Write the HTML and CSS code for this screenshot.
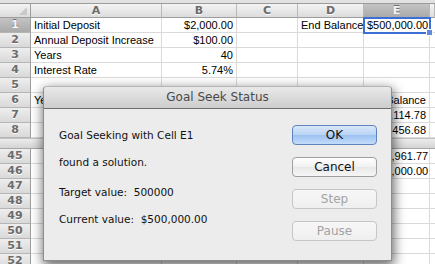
FILE: index.html
```html
<!DOCTYPE html>
<html lang="en">
<head>
    <meta charset="UTF-8">
    <title>Goal Seek Status</title>
    <link rel="stylesheet" href="styles.css">
</head>
<body>

    <div class="topbar"></div>

    <div class="sheet">
        <div class="row head">
            <div class="rh corner"><span class="tri"></span></div>
            <div class="ch">A</div>
            <div class="ch">B</div>
            <div class="ch">C</div>
            <div class="ch">D</div>
            <div class="ch sel">E</div>
            <div class="ch"></div>
        </div>
        <div class="row">
            <div class="rh sel">1</div>
            <div class="c">Initial Deposit</div>
            <div class="c num">$2,000.00</div>
            <div class="c"></div>
            <div class="c">End Balance</div>
            <div class="c num active">$500,000.00<span class="handle"></span></div>
            <div class="c"></div>
        </div>
        <div class="row">
            <div class="rh">2</div>
            <div class="c">Annual Deposit Increase</div>
            <div class="c num">$100.00</div>
            <div class="c"></div><div class="c"></div><div class="c"></div><div class="c"></div>
        </div>
        <div class="row">
            <div class="rh">3</div>
            <div class="c">Years</div>
            <div class="c num">40</div>
            <div class="c"></div><div class="c"></div><div class="c"></div><div class="c"></div>
        </div>
        <div class="row">
            <div class="rh">4</div>
            <div class="c">Interest Rate</div>
            <div class="c num">5.74%</div>
            <div class="c"></div><div class="c"></div><div class="c"></div><div class="c"></div>
        </div>
        <div class="row">
            <div class="rh">5</div>
            <div class="c"></div><div class="c"></div><div class="c"></div><div class="c"></div><div class="c"></div><div class="c"></div>
        </div>
        <div class="row">
            <div class="rh">6</div>
            <div class="c">Year</div>
            <div class="c"></div><div class="c"></div><div class="c"></div>
            <div class="c num">Balance</div>
            <div class="c"></div>
        </div>
        <div class="row">
            <div class="rh">7</div>
            <div class="c"></div><div class="c"></div><div class="c"></div><div class="c"></div>
            <div class="c num">$2,114.78</div>
            <div class="c"></div>
        </div>
        <div class="row">
            <div class="rh">8</div>
            <div class="c"></div><div class="c"></div><div class="c"></div><div class="c"></div>
            <div class="c num">$4,456.68</div>
            <div class="c"></div>
        </div>

        <div class="band"></div>

        <div class="row">
            <div class="rh">45</div>
            <div class="c"></div><div class="c"></div><div class="c"></div><div class="c"></div>
            <div class="c num">$466,961.77</div>
            <div class="c"></div>
        </div>
        <div class="row">
            <div class="rh">46</div>
            <div class="c"></div><div class="c"></div><div class="c"></div><div class="c"></div>
            <div class="c num">$500,000.00</div>
            <div class="c"></div>
        </div>
        <div class="row">
            <div class="rh">47</div>
            <div class="c"></div><div class="c"></div><div class="c"></div><div class="c"></div><div class="c"></div><div class="c"></div>
        </div>
        <div class="row">
            <div class="rh">48</div>
            <div class="c"></div><div class="c"></div><div class="c"></div><div class="c"></div><div class="c"></div><div class="c"></div>
        </div>
        <div class="row">
            <div class="rh">49</div>
            <div class="c"></div><div class="c"></div><div class="c"></div><div class="c"></div><div class="c"></div><div class="c"></div>
        </div>
        <div class="row">
            <div class="rh">50</div>
            <div class="c"></div><div class="c"></div><div class="c"></div><div class="c"></div><div class="c"></div><div class="c"></div>
        </div>
        <div class="row">
            <div class="rh">51</div>
            <div class="c"></div><div class="c"></div><div class="c"></div><div class="c"></div><div class="c"></div><div class="c"></div>
        </div>
        <div class="row">
            <div class="rh">52</div>
            <div class="c"></div><div class="c"></div><div class="c"></div><div class="c"></div><div class="c"></div><div class="c"></div>
        </div>
    </div>

    <div class="dialog">
        <div class="titlebar">Goal Seek Status</div>
        <div class="dbody">
            <div class="msg">
                <p>Goal Seeking with Cell E1</p>
                <p>found a solution.</p>
                <p class="gap">Target value:&nbsp; 500000</p>
                <p>Current value:&nbsp; $500,000.00</p>
            </div>
            <div class="buttons">
                <button class="btn default">OK</button>
                <button class="btn">Cancel</button>
                <button class="btn" disabled>Step</button>
                <button class="btn" disabled>Pause</button>
            </div>
        </div>
    </div>

</body>
</html>
```

FILE: styles.css
```css
body {
    margin: 0;
    width: 435px;
    height: 264px;
    overflow: hidden;
    position: relative;
    background-color: #ffffff;
    font-family: 'Liberation Sans', Arial, sans-serif;
}

.topbar {
    height: 4px;
    background-color: #e2e2e2;
    border-bottom: 1px solid #9c9c9c;
    box-sizing: border-box;
}

/* spreadsheet grid */

.row {
    display: grid;
    grid-template-columns: 31px 131px 75px 61px 66px 66px 1fr;
    height: 15px;
}

.head {
    height: 14px;
}

.c {
    box-sizing: border-box;
    border-right: 1px solid #dadada;
    border-bottom: 1px solid #dadada;
    padding: 0 3px;
    font-size: 11px;
    line-height: 14px;
    color: #000;
    white-space: nowrap;
    overflow: hidden;
}

.num {
    text-align: right;
}

.active {
    position: relative;
    overflow: visible;
    outline: 2px solid #3d6ed4;
    outline-offset: -1px;
    z-index: 1;
}

.handle {
    position: absolute;
    right: -4px;
    bottom: -4px;
    width: 5px;
    height: 5px;
    background-color: #5f8ae0;
    border: 1px solid #ffffff;
}

.rh, .ch {
    box-sizing: border-box;
    font-family: 'DejaVu Sans', sans-serif;
    font-weight: bold;
    font-size: 11px;
    line-height: 14px;
    color: #6b6b6b;
    text-align: center;
    text-shadow: 0 1px 0 #ffffff;
}

.rh {
    background: linear-gradient(#eeeeee, #d9d9d9);
    border-right: 1px solid #9d9d9d;
    border-bottom: 1px solid #b5b5b5;
}

.ch {
    background: linear-gradient(#f4f4f4, #dcdcdc);
    border-right: 1px solid #b9b9b9;
    border-bottom: 1px solid #9d9d9d;
    line-height: 13px;
}

.rh.sel, .ch.sel {
    background: linear-gradient(#c4c4c4, #a9a9a9);
    color: #f4f4f4;
    text-shadow: 0 -1px 0 #6f6f6f;
}

.corner {
    position: relative;
    background: linear-gradient(#f4f4f4, #dcdcdc);
    border-bottom: 1px solid #9d9d9d;
}

.tri {
    position: absolute;
    right: 3px;
    bottom: 2px;
    width: 0;
    height: 0;
    border-left: 8px solid transparent;
    border-bottom: 8px solid #c9c9c9;
}

.band {
    height: 11px;
    box-sizing: border-box;
    background: linear-gradient(#ececec, #d4d4d4);
    border-top: 1px solid #c2c2c2;
    border-bottom: 1px solid #a8a8a8;
}

/* dialog */

.dialog {
    position: absolute;
    left: 43px;
    top: 86px;
    width: 349px;
    height: 175px;
    box-sizing: border-box;
    background-color: #ececec;
    border: 1px solid #8c8c8c;
    border-top-color: #b5b5b5;
    border-radius: 4px 4px 0 0;
    box-shadow: 1px 4px 12px 1px rgba(0, 0, 0, 0.6);
    font-family: 'DejaVu Sans', sans-serif;
    z-index: 5;
}

.titlebar {
    height: 22px;
    box-sizing: border-box;
    background: linear-gradient(#e9e9e9, #cdcdcd);
    border-bottom: 1px solid #6e6e6e;
    border-radius: 4px 4px 0 0;
    text-align: center;
    font-size: 12px;
    line-height: 21px;
    color: #4a4a4a;
}

.dbody {
    display: flex;
    justify-content: space-between;
    padding: 16px 14px 0 15px;
}

.msg {
    margin-top: 3px;
    font-size: 10.5px;
    color: #111;
}

.msg p {
    margin: 0;
    line-height: 14px;
}

.msg p + p {
    margin-top: 13px;
}

.msg p.gap {
    margin-top: 16px;
}

.buttons {
    display: flex;
    flex-direction: column;
    gap: 12px;
}

.btn {
    width: 85px;
    height: 20px;
    padding: 0;
    font-family: 'DejaVu Sans', sans-serif;
    font-size: 12px;
    line-height: 18px;
    color: #111;
    background: linear-gradient(#ffffff, #f1f1f1 50%, #e8e8e8 51%, #f6f6f6);
    border: 1px solid #9f9f9f;
    border-radius: 4px;
}

.btn.default {
    background: linear-gradient(#d9e7f9, #b9d3f4 50%, #9cc1f0 51%, #c3dcfa);
    border-color: #5f83bd;
}

.btn:disabled {
    color: #a3a3a3;
    background: linear-gradient(#f7f7f7, #efefef);
    border-color: #c6c6c6;
}
```
